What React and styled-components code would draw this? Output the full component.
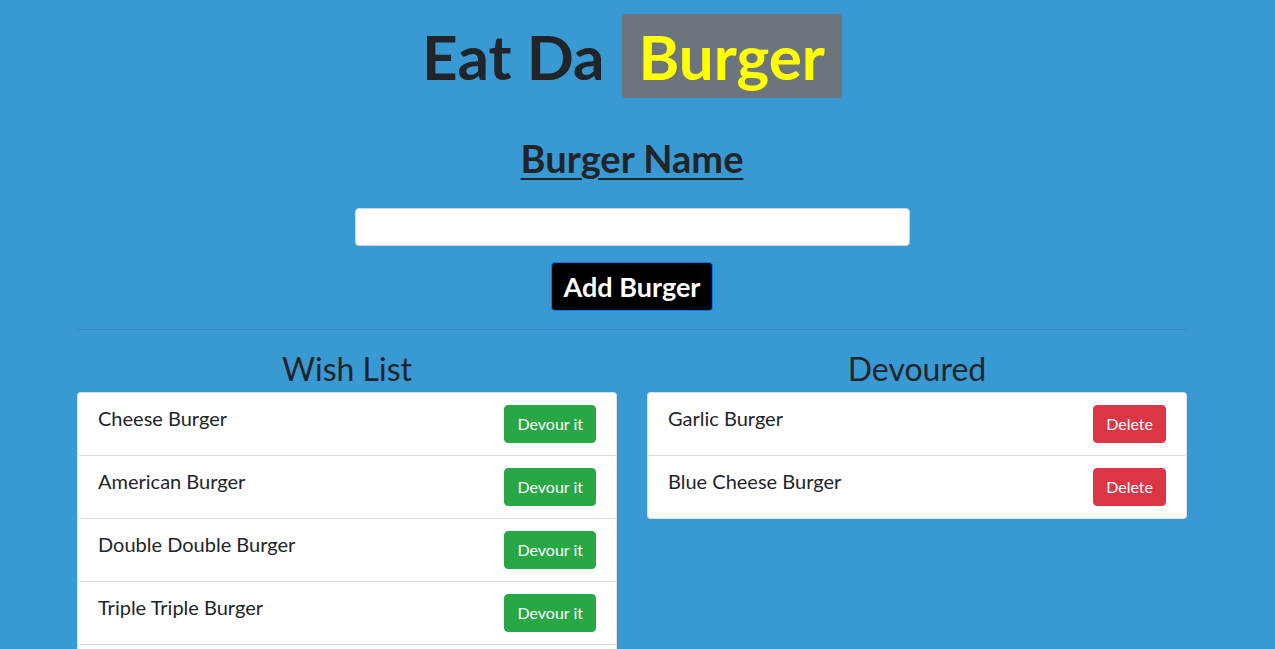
import React from "react";
import styled, { createGlobalStyle } from "styled-components";

const GlobalStyle = createGlobalStyle`
  html, body {
    margin: 0;
    padding: 0;
    background: #3899d3;
    overflow: hidden;
  }
  body {
    font-family: Lato, "Open Sans", "Liberation Sans", sans-serif;
    color: #212529;
    line-height: 1.5;
  }
`;

const Page = styled.div`
  width: 1264px;
  height: 649px;
  overflow: hidden;
`;

const Container = styled.div`
  width: 1110px;
  margin: 0 auto;
`;

const Header = styled.header`
  display: flex;
  flex-direction: column;
  align-items: center;
  padding-top: 14px;
`;

const Title = styled.h1`
  margin: 0;
  display: flex;
  align-items: center;
  gap: 17px;
  font-size: 62px;
  font-weight: 700;
  line-height: 1;
`;

const Badge = styled.span`
  display: inline-flex;
  align-items: center;
  height: 84px;
  padding: 0 17px;
  border-radius: 4px;
  background: #6c757d;
  color: #ffff00;
`;

const Label = styled.h2`
  margin: 38px 0 0;
  font-size: 38px;
  font-weight: 700;
  line-height: 1.2;
  text-decoration: underline;
  text-underline-offset: 5px;
  text-decoration-thickness: 2px;
`;

const Input = styled.input`
  box-sizing: border-box;
  width: 555px;
  height: 38px;
  margin-top: 26px;
  border: 1px solid #ced4da;
  border-radius: 4px;
  background: #fff;
  font: inherit;
  padding: 6px 12px;
`;

const AddButton = styled.button`
  box-sizing: border-box;
  margin-top: 16px;
  height: 49px;
  padding: 0 12px;
  background: #000;
  color: #fff;
  border: 1px solid #007bff;
  border-radius: 4px;
  font-family: inherit;
  font-size: 27px;
  font-weight: 700;
`;

const Rule = styled.hr`
  margin: 18px 0 0;
  border: 0;
  border-top: 1px solid rgba(0, 0, 0, 0.1);
`;

const Columns = styled.div`
  display: grid;
  grid-template-columns: 540px 540px;
  gap: 30px;
  margin-top: 20px;
`;

const ColumnTitle = styled.h2`
  margin: 0 0 4px;
  text-align: center;
  font-size: 32px;
  font-weight: 400;
  line-height: 1.2;
`;

const List = styled.ul`
  list-style: none;
  margin: 0;
  padding: 0 0 ${(p) => (p.$continues ? "40px" : "0")};
  background: #fff;
  border: 1px solid rgba(0, 0, 0, 0.125);
  border-radius: 4px;
  ${(p) => p.$continues && "& > li:last-child { border-bottom: 1px solid rgba(0, 0, 0, 0.125); }"}
`;

const Item = styled.li`
  display: flex;
  justify-content: space-between;
  align-items: flex-start;
  padding: 12px 20px;
  font-size: 20px;
  line-height: 26px;
  & + & {
    border-top: 1px solid rgba(0, 0, 0, 0.125);
  }
`;

const ActionButton = styled.button`
  box-sizing: border-box;
  height: 38px;
  padding: 0 12px;
  border: 1px solid ${(p) => (p.$danger ? "#dc3545" : "#28a745")};
  border-radius: 4px;
  background: ${(p) => (p.$danger ? "#dc3545" : "#28a745")};
  color: #fff;
  font-family: inherit;
  font-size: 16px;
`;

const wishList = [
  "Cheese Burger",
  "American Burger",
  "Double Double Burger",
  "Triple Triple Burger",
];

const devoured = ["Garlic Burger", "Blue Cheese Burger"];

export default function App() {
  return (
    <Page>
      <GlobalStyle />
      <Container>
        <Header>
          <Title>
            Eat Da <Badge>Burger</Badge>
          </Title>
          <Label>Burger Name</Label>
          <Input type="text" />
          <AddButton type="button">Add Burger</AddButton>
        </Header>
        <Rule />
        <Columns>
          <section>
            <ColumnTitle>Wish List</ColumnTitle>
            <List $continues>
              {wishList.map((name) => (
                <Item key={name}>
                  {name}
                  <ActionButton type="button">Devour it</ActionButton>
                </Item>
              ))}
            </List>
          </section>
          <section>
            <ColumnTitle>Devoured</ColumnTitle>
            <List>
              {devoured.map((name) => (
                <Item key={name}>
                  {name}
                  <ActionButton type="button" $danger>
                    Delete
                  </ActionButton>
                </Item>
              ))}
            </List>
          </section>
        </Columns>
      </Container>
    </Page>
  );
}
